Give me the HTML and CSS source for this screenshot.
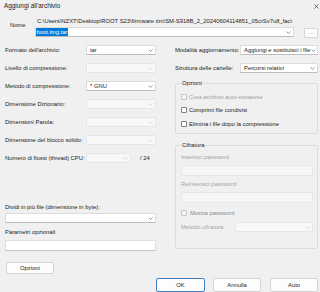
FILE: index.html
```html
<!DOCTYPE html>
<html lang="it">
<head>
	<meta charset="UTF-8">
	<title>Aggiungi all'archivio</title>
	<link rel="stylesheet" href="styles.css">
</head>
<body>
	<div class="titlebar">
		<span class="title">Aggiungi all'archivio</span>
		<svg class="close" width="5" height="5" viewBox="0 0 5 5"><path d="M0.5 0.5L4.5 4.5M4.5 0.5L0.5 4.5" stroke="#333" stroke-width="0.7"/></svg>
	</div>

	<div class="name-row">
		<div class="name-label">Nome</div>
		<div class="name-field">
			<div class="path">C:\Users\NZXT\Desktop\ROOT S23\firmware tim\SM-S918B_2_20240604114851_05crSv7u8_fac\</div>
			<div class="combo wide"><span class="sel">boot.img.tar</span><svg class="chev" width="5" height="3" viewBox="0 0 5 3"><path d="M0.5 0.5L2.5 2.5L4.5 0.5" fill="none" stroke="#666" stroke-width="0.7"/></svg></div>
		</div>
		<div class="browse">...</div>
	</div>

	<div class="columns">
		<div class="left">
			<div class="field-list">
				<div class="field-row"><span class="lbl">Formato dell'archivio:</span><div class="combo"><span>tar</span><svg class="chev" width="5" height="3" viewBox="0 0 5 3"><path d="M0.5 0.5L2.5 2.5L4.5 0.5" fill="none" stroke="#666" stroke-width="0.7"/></svg></div></div>
				<div class="field-row"><span class="lbl">Livello di compressione:</span><div class="combo off"><span></span><svg class="chev" width="5" height="3" viewBox="0 0 5 3"><path d="M0.5 0.5L2.5 2.5L4.5 0.5" fill="none" stroke="#c8c8c8" stroke-width="0.7"/></svg></div></div>
				<div class="field-row"><span class="lbl">Metodo di compressione:</span><div class="combo"><span>* GNU</span><svg class="chev" width="5" height="3" viewBox="0 0 5 3"><path d="M0.5 0.5L2.5 2.5L4.5 0.5" fill="none" stroke="#666" stroke-width="0.7"/></svg></div></div>
				<div class="field-row"><span class="lbl">Dimensione Dizionario:</span><div class="combo off"><span></span><svg class="chev" width="5" height="3" viewBox="0 0 5 3"><path d="M0.5 0.5L2.5 2.5L4.5 0.5" fill="none" stroke="#c8c8c8" stroke-width="0.7"/></svg></div></div>
				<div class="field-row"><span class="lbl">Dimensioni Parola:</span><div class="combo off"><span></span><svg class="chev" width="5" height="3" viewBox="0 0 5 3"><path d="M0.5 0.5L2.5 2.5L4.5 0.5" fill="none" stroke="#c8c8c8" stroke-width="0.7"/></svg></div></div>
				<div class="field-row"><span class="lbl">Dimensione del blocco solido:</span><div class="combo off"><span></span><svg class="chev" width="5" height="3" viewBox="0 0 5 3"><path d="M0.5 0.5L2.5 2.5L4.5 0.5" fill="none" stroke="#c8c8c8" stroke-width="0.7"/></svg></div></div>
				<div class="field-row"><span class="lbl">Numero di flussi (thread) CPU:</span><div class="combo off short"><span></span><svg class="chev" width="5" height="3" viewBox="0 0 5 3"><path d="M0.5 0.5L2.5 2.5L4.5 0.5" fill="none" stroke="#c8c8c8" stroke-width="0.7"/></svg></div><span class="max">/ 24</span></div>
			</div>

			<div class="split">
				<div class="lbl">Dividi in più file (dimensione in byte):</div>
				<div class="combo full"><span></span><svg class="chev" width="5" height="3" viewBox="0 0 5 3"><path d="M0.5 0.5L2.5 2.5L4.5 0.5" fill="none" stroke="#666" stroke-width="0.7"/></svg></div>
				<div class="lbl params">Parametri opzionali:</div>
				<div class="input"></div>
				<div class="btn opts">Opzioni</div>
			</div>
		</div>

		<div class="right">
			<div class="field-list">
				<div class="field-row"><span class="lbl">Modalità aggiornamento:</span><div class="combo"><span>Aggiungi e sostituisci i file</span><svg class="chev" width="5" height="3" viewBox="0 0 5 3"><path d="M0.5 0.5L2.5 2.5L4.5 0.5" fill="none" stroke="#666" stroke-width="0.7"/></svg></div></div>
				<div class="field-row"><span class="lbl">Struttura delle cartelle:</span><div class="combo"><span>Percorsi relativi</span><svg class="chev" width="5" height="3" viewBox="0 0 5 3"><path d="M0.5 0.5L2.5 2.5L4.5 0.5" fill="none" stroke="#666" stroke-width="0.7"/></svg></div></div>
			</div>

			<div class="group options">
				<div class="group-title">Opzioni</div>
				<div class="check off first"><span class="box"></span>Crea archivio auto-estraente</div>
				<div class="check"><span class="box"></span>Comprimi file condivisi</div>
				<div class="check last"><span class="box"></span>Elimina i file dopo la compressione</div>
			</div>

			<div class="group crypt">
				<div class="group-title">Cifratura</div>
				<div class="dim pw1">Inserisci password</div>
				<div class="input off"></div>
				<div class="dim pw2">Reinserisci password</div>
				<div class="input off"></div>
				<div class="check off show"><span class="box"></span>Mostra password</div>
				<div class="field-row method"><span class="dim">Metodo cifratura:</span><div class="combo off"><span></span><svg class="chev" width="5" height="3" viewBox="0 0 5 3"><path d="M0.5 0.5L2.5 2.5L4.5 0.5" fill="none" stroke="#c8c8c8" stroke-width="0.7"/></svg></div></div>
			</div>
		</div>
	</div>

	<div class="buttons">
		<div class="btn ok">OK</div>
		<div class="btn">Annulla</div>
		<div class="btn">Auto</div>
	</div>
</body>
</html>
```

FILE: styles.css
```css
* { box-sizing: border-box; margin: 0; padding: 0; }
body { width: 320px; height: 292px; overflow: hidden; background: #f0f0f0; color: #222; font: 5.85px/8px "Liberation Sans", Arial, sans-serif; white-space: nowrap; }

.titlebar { height: 12px; display: flex; align-items: center; justify-content: space-between; padding: 0 1px 0 4px; }
.title { font-size: 6.4px; }

.name-row { display: flex; align-items: flex-start; height: 33px; padding-top: 5px; }
.name-label { width: 35px; padding-left: 10px; margin-top: 4px; }
.name-field { width: 259px; }
.path { height: 8px; padding-left: 2px; }
.browse { width: 14px; height: 10px; margin: 11px 0 0 10px; background: #fdfdfd; border: 1px solid #d6d6d6; border-radius: 1px; color: #8a8a8a; line-height: 7px; text-align: center; }

.combo { height: 10px; display: flex; align-items: center; justify-content: space-between; padding: 0 2px 0 3px; background: #fff; border: 1px solid #dcdcdc; border-bottom-color: #bdbdbd; border-radius: 1px; overflow: hidden; }
.combo.off { background: #f8f8f8; border-color: #e6e6e6; }
.combo.wide { margin-top: 2px; padding-left: 0; }
.sel { background: #0078d7; color: #fff; padding: 0 0.5px; line-height: 8px; }
.chev { flex: none; }

.columns { display: flex; gap: 19px; padding-left: 5px; }
.left { width: 151px; }
.right { width: 143px; }

.field-list { display: flex; flex-direction: column; gap: 8px; }
.field-row { display: flex; align-items: center; height: 10px; flex: none; }
.left .lbl { width: 81px; flex: none; }
.left .combo { width: 70px; }
.left .combo.short { width: 45px; }
.max { margin-left: 9px; }
.right .field-row .lbl { width: 65px; flex: none; }
.right .field-row .combo { width: 78px; }

.split { margin-top: 40px; }
.combo.full { width: 151px; margin-top: 2px; }
.params { margin-top: 5px; }
.input { height: 11px; margin-top: 4px; background: #fff; border: 1px solid #e0e0e0; border-bottom-color: #c4c4c4; border-radius: 1px; }
.input.off { background: #f7f7f7; border-color: #e6e6e6; }

.btn { height: 12px; background: #fdfdfd; border: 1px solid #d3d3d3; border-radius: 2px; text-align: center; line-height: 10px; }
.opts { width: 48px; margin: 11px 0 0 1px; }

.group { border: 1px solid #dcdcdc; border-radius: 2px; padding: 0 4px 0 5px; }
.group-title { width: fit-content; margin: -5px 0 0 0; padding: 0 1px; background: #f0f0f0; }
.options { height: 51px; margin-top: 10px; }
.crypt { height: 104px; margin-top: 11px; }

.check { display: flex; align-items: center; gap: 2px; height: 8px; margin-top: 5px; }
.check.first { margin-top: 6px; }
.check.last { margin-top: 6px; }
.box { width: 6px; height: 6px; border: 1px solid #7a7a7a; border-radius: 1px; background: #fff; }
.check.off { color: #a0a0a0; }
.check.off .box { border-color: #c4c4c4; background: #f6f6f6; }

.dim { color: #a4a4a4; }
.pw1 { margin-top: 4px; }
.pw2 { margin-top: 4px; }
.crypt .input { margin-top: 4px; }
.check.show { margin-top: 6px; gap: 3px; color: #8c8c8c; }
.method { margin-top: 5px; justify-content: space-between; }
.method .combo { width: 52px; }

.buttons { display: flex; justify-content: flex-end; gap: 8px; padding-right: 2px; margin-top: 4px; }
.buttons .btn { width: 48px; height: 14px; line-height: 12px; }
.buttons .ok { width: 49px; border-color: #3f7fc4; }
.buttons .btn + .btn + .btn { margin-left: 1px; }
```
